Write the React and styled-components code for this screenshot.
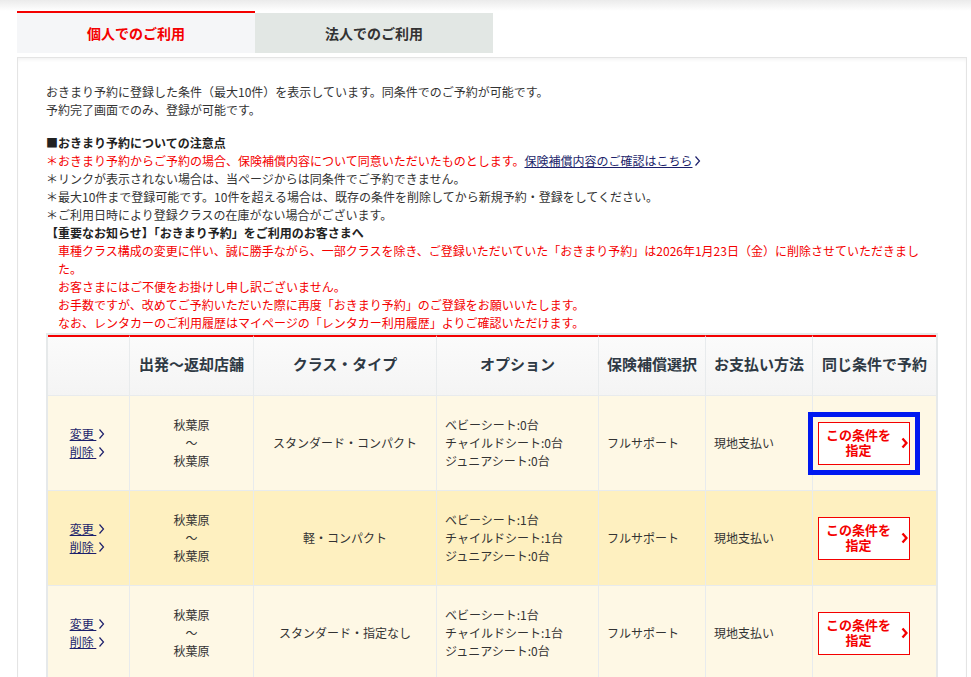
import styled, { createGlobalStyle } from 'styled-components';

const GlobalStyle = createGlobalStyle`
  body {
    margin: 0;
    background: #fff linear-gradient(to bottom, #ebebeb 0, #fff 11px) no-repeat;
    font-family: "Noto Sans CJK JP", "Noto Sans", sans-serif;
    color: #333;
  }
`;

const Page = styled.div`
  padding: 11px 0 0 17px;
`;

const Tabs = styled.div`
  display: flex;
  align-items: flex-end;
  margin-bottom: 4px;
`;

const Tab = styled.div`
  width: 238px;
  height: 40px;
  display: flex;
  align-items: center;
  justify-content: center;
  font-size: 14px;
  font-weight: bold;
  background: ${p => (p.$active ? '#f5f6f8' : '#e2e7e4')};
  color: ${p => (p.$active ? '#f40000' : '#333')};
  border-top: ${p => (p.$active ? '2px solid #f40000' : 'none')};
`;

const Panel = styled.div`
  width: 950px;
  box-sizing: border-box;
  border: 1px solid #e4e4e4;
  border-bottom: none;
  box-shadow: inset 0 3px 4px -2px rgba(0, 0, 0, 0.07);
  padding: 25px 28px 0;
  font-size: 12px;
  line-height: 18px;
`;

const Intro = styled.p`
  margin: 0 0 15px;
`;

const Heading = styled.div`
  font-weight: bold;
  color: #222;
`;

const Line = styled.div`
  color: ${p => (p.$red ? '#f40000' : '#333')};
`;

const Notice = styled.div`
  padding-left: 12px;
  color: #f40000;
`;

const TextLink = styled.a`
  color: #1c1f6b;
  text-decoration: underline;
  cursor: pointer;
`;

const Arrow = ({ color = '#1c1f6b', bold }) => (
  <svg width="7" height="12" viewBox="0 0 7 12" style={{ verticalAlign: '-1px', marginLeft: 2 }}>
    <path d="M1.5 1.5 L5.5 6 L1.5 10.5" fill="none" stroke={color} strokeWidth={bold ? 2.4 : 1.2} />
  </svg>
);

const Table = styled.table`
  width: 892px;
  table-layout: fixed;
  border-collapse: separate;
  border-spacing: 0;
  border: 2px solid #e6e9ea;
  border-bottom: none;
  margin-top: 1px;
`;

const Col = styled.col`
  width: ${p => p.$w}px;
`;

const Th = styled.th`
  height: 54px;
  padding: 0 0 4px;
  border-top: 2px solid #f40000;
  border-left: ${p => (p.$first ? 'none' : '1px solid #e8ebed')};
  background: linear-gradient(to bottom, #fbfbfb, #f4f4f4);
  font-size: 15px;
  font-weight: bold;
  color: #2e3944;
  text-align: center;
`;

const Row = styled.tr`
  background: ${p => (p.$alt ? '#fef0c0' : '#fef8e5')};
`;

const Td = styled.td`
  height: 94px;
  padding: 0 8px;
  border-top: 1px solid #e8ebed;
  border-left: ${p => (p.$first ? 'none' : '1px solid #e8ebed')};
  text-align: ${p => p.$align || 'left'};
  font-size: 12px;
  line-height: 18px;
  color: #333;
`;

const Links = styled.div`
  display: flex;
  flex-direction: column;
  align-items: center;
  padding-right: 2px;
`;

const ReserveCell = styled.div`
  display: flex;
  padding-left: 5px;
  margin-left: -8px;
`;

const Reserve = styled.button`
  width: 92px;
  height: 43px;
  box-sizing: border-box;
  display: flex;
  align-items: center;
  justify-content: center;
  gap: 8px;
  padding: 0 0 0 6px;
  background: #fff;
  border: 1px solid #f40000;
  color: #f40000;
  font-family: "Liberation Sans", "Noto Sans CJK JP", sans-serif;
  font-size: 13px;
  font-weight: bold;
  line-height: 15px;
  text-align: center;
  cursor: pointer;
  outline: ${p => (p.$focused ? '5px solid #0019f0' : 'none')};
  outline-offset: 5px;
`;

const rows = [
  { cls: 'スタンダード・コンパクト', seats: [0, 0, 0], focused: true },
  { cls: '軽・コンパクト', seats: [1, 1, 0], alt: true },
  { cls: 'スタンダード・指定なし', seats: [1, 1, 0] },
];

const headers = ['', '出発～返却店舗', 'クラス・タイプ', 'オプション', '保険補償選択', 'お支払い方法', '同じ条件で予約'];
const widths = [81, 124, 183, 162, 107, 107, 124];

export default function App() {
  return (
    <Page>
      <GlobalStyle />
      <Tabs>
        <Tab $active>個人でのご利用</Tab>
        <Tab>法人でのご利用</Tab>
      </Tabs>
      <Panel>
        <Intro>
          おきまり予約に登録した条件（最大10件）を表示しています。同条件でのご予約が可能です。
          <br />
          予約完了画面でのみ、登録が可能です。
        </Intro>
        <Heading>■おきまり予約についての注意点</Heading>
        <Line $red>
          ＊おきまり予約からご予約の場合、保険補償内容について同意いただいたものとします。
          <TextLink>保険補償内容のご確認はこちら</TextLink>
          <Arrow />
        </Line>
        <Line>＊リンクが表示されない場合は、当ページからは同条件でご予約できません。</Line>
        <Line>＊最大10件まで登録可能です。10件を超える場合は、既存の条件を削除してから新規予約・登録をしてください。</Line>
        <Line>＊ご利用日時により登録クラスの在庫がない場合がございます。</Line>
        <Heading>【重要なお知らせ】「おきまり予約」をご利用のお客さまへ</Heading>
        <Notice>
          車種クラス構成の変更に伴い、誠に勝手ながら、一部クラスを除き、ご登録いただいていた「おきまり予約」は2026年1月23日（金）に削除させていただきました。
          <br />
          お客さまにはご不便をお掛けし申し訳ございません。
          <br />
          お手数ですが、改めてご予約いただいた際に再度「おきまり予約」のご登録をお願いいたします。
          <br />
          なお、レンタカーのご利用履歴はマイページの「レンタカー利用履歴」よりご確認いただけます。
        </Notice>
        <Table>
          <colgroup>
            {widths.map((w, i) => (
              <Col key={i} $w={w} />
            ))}
          </colgroup>
          <thead>
            <tr>
              {headers.map((h, i) => (
                <Th key={i} $first={i === 0}>
                  {h}
                </Th>
              ))}
            </tr>
          </thead>
          <tbody>
            {rows.map((r, i) => (
              <Row key={i} $alt={r.alt}>
                <Td $first $align="center">
                  <Links>
                    <span>
                      <TextLink>変更 </TextLink>
                      <Arrow />
                    </span>
                    <span>
                      <TextLink>削除 </TextLink>
                      <Arrow />
                    </span>
                  </Links>
                </Td>
                <Td $align="center">
                  秋葉原
                  <br />～<br />
                  秋葉原
                </Td>
                <Td $align="center">{r.cls}</Td>
                <Td>
                  ベビーシート:{r.seats[0]}台
                  <br />
                  チャイルドシート:{r.seats[1]}台
                  <br />
                  ジュニアシート:{r.seats[2]}台
                </Td>
                <Td>フルサポート</Td>
                <Td>現地支払い</Td>
                <Td>
                  <ReserveCell>
                    <Reserve $focused={r.focused}>
                      <span>
                        この条件を
                        <br />
                        指定
                      </span>
                      <Arrow color="#f40000" bold />
                    </Reserve>
                  </ReserveCell>
                </Td>
              </Row>
            ))}
          </tbody>
        </Table>
      </Panel>
    </Page>
  );
}
